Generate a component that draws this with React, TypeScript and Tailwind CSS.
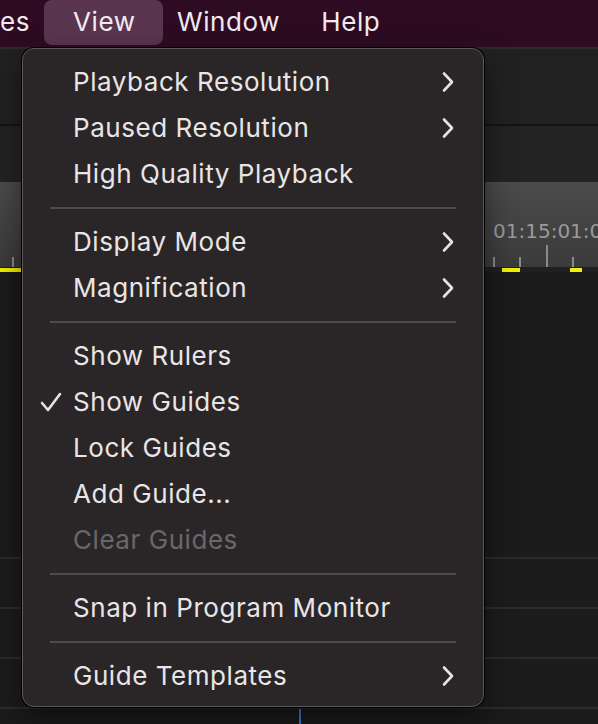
import React from "react";

const FONT = { fontFamily: "Inter, 'Noto Sans', 'Liberation Sans', sans-serif" };

function Chevron() {
  return (
    <svg width="14" height="22" viewBox="0 0 14 22" className="shrink-0">
      <path d="M3 2.5 L11 11 L3 19.5" fill="none" stroke="#e6e2e4" strokeWidth="2.6" strokeLinecap="round" strokeLinejoin="round" />
    </svg>
  );
}

function Check() {
  return (
    <svg width="22" height="20" viewBox="0 0 22 20">
      <path d="M2 11 L8 18 L20 2" fill="none" stroke="#e6e2e4" strokeWidth="2.6" strokeLinecap="round" strokeLinejoin="round" />
    </svg>
  );
}

type Item = { label: string; sub?: boolean; checked?: boolean; disabled?: boolean } | "sep";

const items: Item[] = [
  { label: "Playback Resolution", sub: true },
  { label: "Paused Resolution", sub: true },
  { label: "High Quality Playback" },
  "sep",
  { label: "Display Mode", sub: true },
  { label: "Magnification", sub: true },
  "sep",
  { label: "Show Rulers" },
  { label: "Show Guides", checked: true },
  { label: "Lock Guides" },
  { label: "Add Guide..." },
  { label: "Clear Guides", disabled: true },
  "sep",
  { label: "Snap in Program Monitor" },
  "sep",
  { label: "Guide Templates", sub: true },
];

export default function App() {
  return (
    <div className="relative w-[598px] h-[724px] overflow-hidden bg-[#1b1b1b]" style={FONT}>
      {/* Menu bar */}
      <div className="flex h-[47px] items-start bg-[#2d0c23] text-[26px] tracking-[0.6px] text-[#f2eaf0]">
        <div className="w-[44px] h-[45px] flex items-center pb-[2px]">es</div>
        <div className="w-[119px] h-[45px] flex items-center pl-[29px] pb-[2px] rounded-[8px] bg-[#5a3550]">View</div>
        <div className="ml-[14px] h-[45px] flex items-center pb-[2px]">Window</div>
        <div className="ml-[41px] h-[45px] flex items-center pb-[2px]">Help</div>
      </div>

      {/* Background panels */}
      <div className="flex flex-col">
        <div className="h-[2px] bg-[#2c2c2c]" />
        <div className="h-[75px] bg-[#212121]" />
        <div className="h-[2px] bg-[#141414]" />
        <div className="h-[56px] bg-[#232323]" />
        <div className="relative h-[85px] bg-gradient-to-b from-[#4b4b4b] to-[#3b3b3b]">
          <div className="absolute left-[493px] top-[39px] text-[20px] leading-none text-[#9a9a9a] whitespace-nowrap" style={{ fontFamily: "'DejaVu Sans', sans-serif" }}>
            01:15:01:01
          </div>
          <div className="absolute left-[12px] top-[75px] w-[2px] h-[10px] bg-[#8a8a8a]" />
          <div className="absolute left-[493px] top-[75px] w-[2px] h-[10px] bg-[#8a8a8a]" />
          <div className="absolute left-[519px] top-[75px] w-[2px] h-[10px] bg-[#8a8a8a]" />
          <div className="absolute left-[546px] top-[63px] w-[2px] h-[22px] bg-[#8a8a8a]" />
          <div className="absolute left-[572px] top-[75px] w-[2px] h-[10px] bg-[#8a8a8a]" />
        </div>
        <div className="relative h-[5px] bg-[#202020]">
          <div className="absolute left-0 top-[1px] w-[22px] h-[4px] bg-[#f2f000]" />
          <div className="absolute left-[502px] top-[1px] w-[18px] h-[4px] bg-[#f2f000]" />
          <div className="absolute left-[570px] top-[1px] w-[12px] h-[4px] bg-[#f2f000]" />
        </div>
        <div className="h-[285px] bg-[#1b1b1b]" />
        <div className="h-[2px] bg-[#2c2c2c]" />
        <div className="h-[48px] bg-[#1c1c1c]" />
        <div className="h-[2px] bg-[#2c2c2c]" />
        <div className="h-[48px] bg-[#1c1c1c]" />
        <div className="h-[2px] bg-[#2c2c2c]" />
        <div className="h-[48px] bg-[#1c1c1c]" />
        <div className="h-[2px] bg-[#2c2c2c]" />
        <div className="relative h-[16px] bg-[#1b1b1b]">
          <div className="absolute left-[299px] top-0 w-[2px] h-[16px] bg-[#3a7bd5]" />
        </div>
      </div>

      {/* Dropdown menu */}
      <div className="absolute left-[22px] top-[48px] w-[462px] h-[659px] rounded-[12px] border border-[#5c585a] bg-[#2a2628] pt-[10px] pb-[7px] shadow-[0_0_0_1px_#000,0_12px_30px_rgba(0,0,0,0.5)] text-[26px] tracking-[0.55px] text-[#e9e5e7]">
        {items.map((it, i) =>
          it === "sep" ? (
            <div key={i} className="h-[22px] flex items-center pl-[27px] pr-[27px]">
              <div className="h-[2px] w-full bg-[#4f4b4d]" />
            </div>
          ) : (
            <div key={i} className="relative h-[46px] flex items-center pl-[50px] pr-[28px]">
              {it.checked && (
                <div className="absolute left-[17px] top-[13px]">
                  <Check />
                </div>
              )}
              <span className={"flex-1 leading-[46px] " + (it.disabled ? "text-[#6b6769]" : "")}>{it.label}</span>
              {it.sub && <Chevron />}
            </div>
          )
        )}
      </div>
    </div>
  );
}
